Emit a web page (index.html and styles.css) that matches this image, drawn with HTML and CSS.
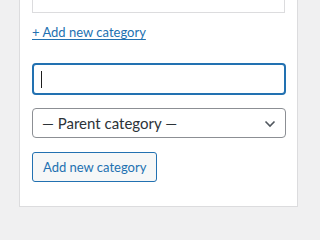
FILE: index.html
```html
<!DOCTYPE html>
<html lang="en">
<head>
<meta charset="utf-8">
<title>Categories</title>
<link rel="stylesheet" href="styles.css">
</head>
<body>
<div class="panel">
  <div class="term-list"></div>
  <a class="toggle-link" href="#">+ Add new category</a>
  <div class="text-input"><span class="caret"></span></div>
  <div class="select-wrap">
    <div class="select">— Parent category —</div>
    <svg class="chevron" width="12" height="8" viewBox="0 0 12 8" aria-hidden="true">
      <path d="M1.5 1.5 L6 6 L10.5 1.5" fill="none" stroke="#50575e" stroke-width="1.6"/>
    </svg>
  </div>
  <button class="submit" type="button">Add new category</button>
</div>
</body>
</html>
```

FILE: styles.css
```css
* {
  box-sizing: border-box;
}
html, body {
  margin: 0;
  padding: 0;
  background: #f0f0f1;
}
body {
  font-family: "Lato", "Noto Sans", sans-serif;
  width: 306px;
  height: 218px;
  overflow: hidden;
}
.panel {
  margin-left: 19px;
  width: 279px;
  background: #fff;
  border: 1px solid #dcdcde;
  border-top: none;
  padding: 0 11px 24px 12px;
  display: flex;
  flex-direction: column;
  align-items: flex-start;
}
.term-list {
  align-self: stretch;
  height: 13px;
  border: 1px solid #dcdcde;
  border-top: none;
  margin-right: 1px;
}
.toggle-link {
  margin-top: 9px;
  font-size: 13px;
  line-height: 20px;
  color: #2271b1;
  text-decoration: underline;
  text-underline-offset: 2px;
}
.text-input {
  margin-top: 21px;
  align-self: stretch;
  height: 32px;
  border: 2px solid #2271b1;
  border-radius: 4px;
  display: flex;
  align-items: center;
  padding-left: 7px;
}
.caret {
  width: 1px;
  height: 17px;
  background: #1e1e1e;
}
.select-wrap {
  margin-top: 13px;
  align-self: stretch;
  position: relative;
}
.select {
  height: 30px;
  border: 1px solid #8c8f94;
  border-radius: 4px;
  padding-left: 9px;
  font-size: 15px;
  line-height: 28px;
  color: #2c3338;
}
.chevron {
  position: absolute;
  right: 10px;
  top: 12px;
}
.submit {
  margin-top: 14px;
  height: 30px;
  padding: 0 10px;
  border: 1px solid #2271b1;
  border-radius: 3px;
  background: #f6f7f7;
  color: #2271b1;
  font-family: "Lato", "Noto Sans", sans-serif;
  font-size: 13px;
  line-height: 28px;
}
```
